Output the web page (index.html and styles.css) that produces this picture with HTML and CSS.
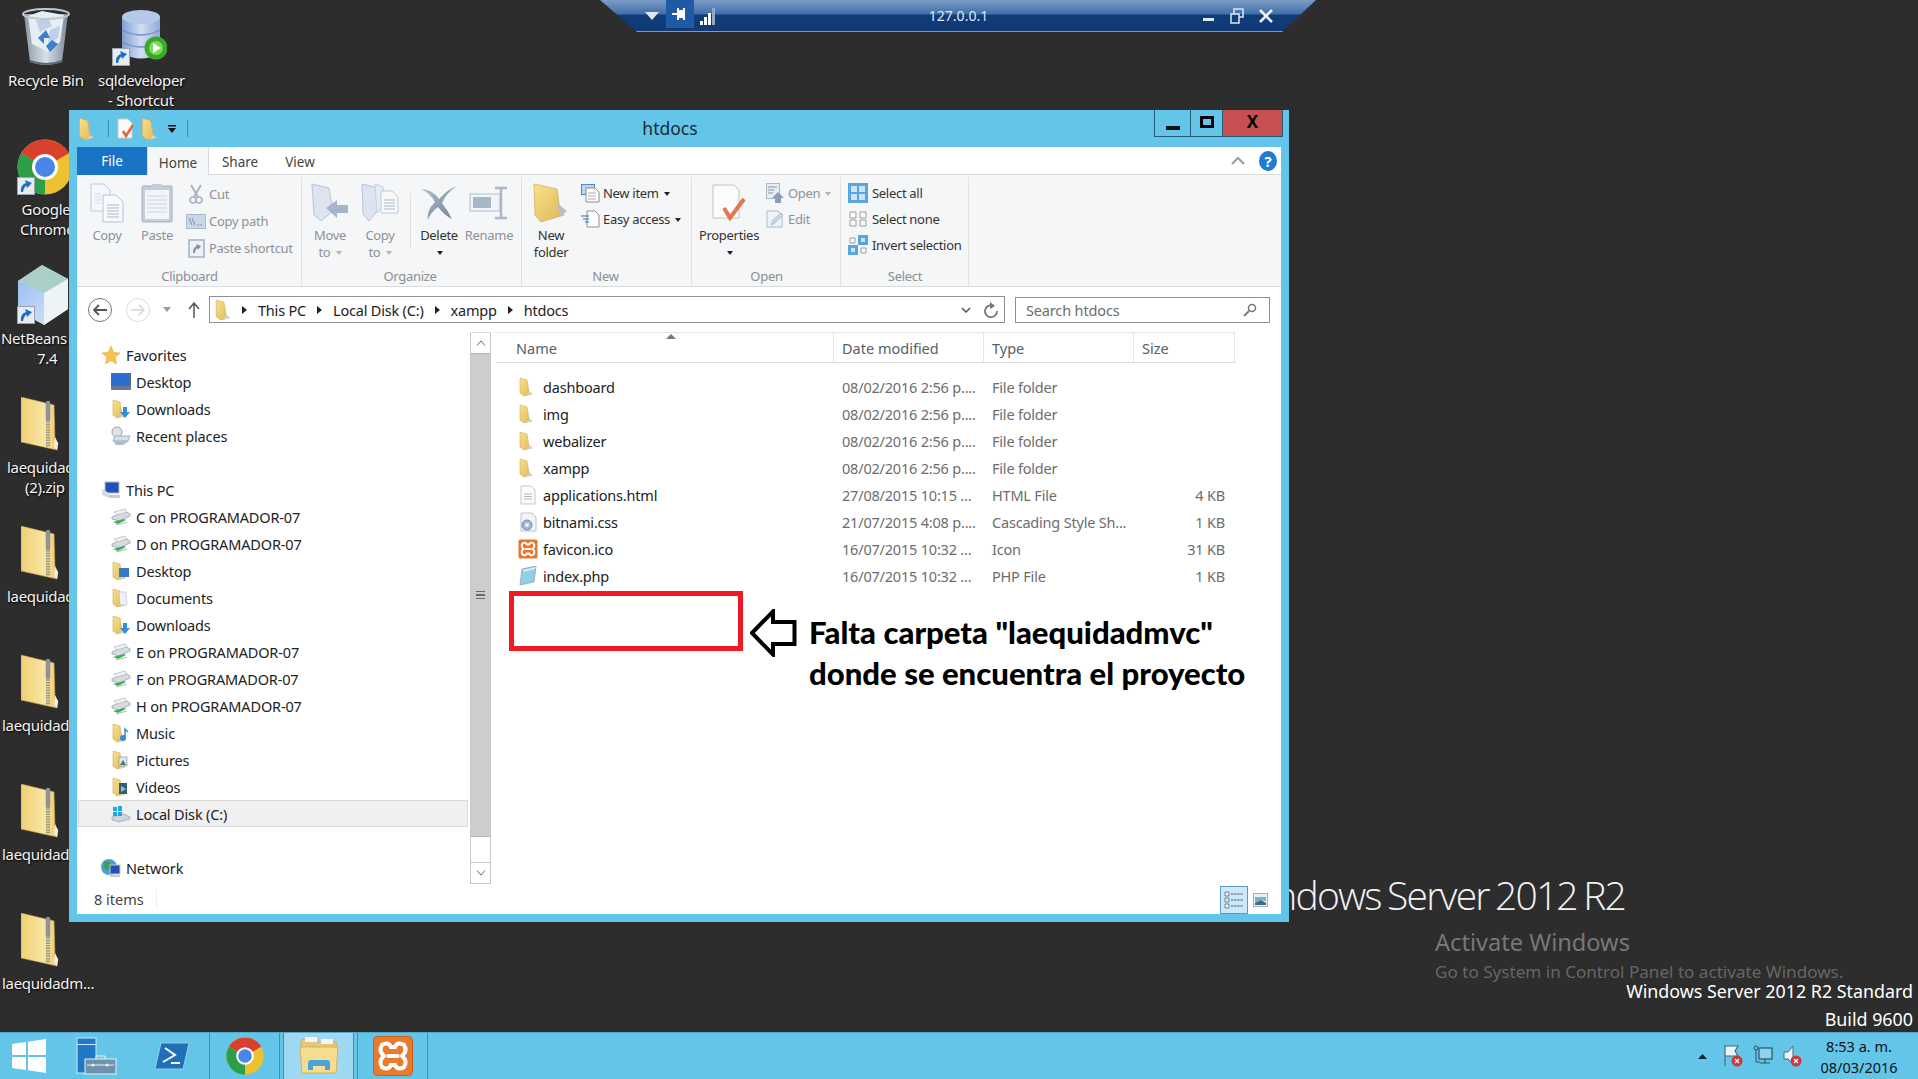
FILE: index.html
```html
<!DOCTYPE html>
<html lang="en">
<head>
<meta charset="utf-8">
<title>htdocs</title>
<link rel="stylesheet" href="styles.css">
</head>
<body>
<svg class="defs" width="0" height="0" aria-hidden="true">
  <defs>
    <linearGradient id="gFold" x1="0" y1="0" x2="1" y2="1"><stop offset="0" stop-color="#f9e18c"/><stop offset="1" stop-color="#deb756"/></linearGradient>
    <linearGradient id="gZip" x1="0" y1="0" x2="1" y2="0"><stop offset="0" stop-color="#efcf74"/><stop offset=".6" stop-color="#f9e6a2"/><stop offset="1" stop-color="#ebc96e"/></linearGradient>
    <linearGradient id="gX" x1="0" y1="0" x2="1" y2="1"><stop offset="0" stop-color="#b3c1d2"/><stop offset="1" stop-color="#6f8298"/></linearGradient>
    <linearGradient id="gCube" x1="0" y1="0" x2="1" y2="1"><stop offset="0" stop-color="#8fb8f0"/><stop offset="1" stop-color="#dfeafa"/></linearGradient>
    <linearGradient id="gBin" x1="0" y1="0" x2="1" y2="0"><stop offset="0" stop-color="#8b9aa8"/><stop offset=".5" stop-color="#d5dfe8"/><stop offset="1" stop-color="#7d8b98"/></linearGradient>
    <linearGradient id="gDb" x1="0" y1="0" x2="1" y2="0"><stop offset="0" stop-color="#7f9fd2"/><stop offset=".5" stop-color="#d2def2"/><stop offset="1" stop-color="#8eaad8"/></linearGradient>
    <symbol id="zip" viewBox="0 0 38 54">
      <path d="M0 0 L33 8 L34 44 L37 46 L36 53 L0 45Z" fill="url(#gZip)" stroke="#c8a24e" stroke-width=".6"/>
      <path d="M27 6 L27 50" stroke="#9a9a8e" stroke-width="4" stroke-dasharray="1.6 1"/>
      <path d="M27 6 L27 22" stroke="#8e9296" stroke-width="4.5" stroke-linecap="round"/>
      <path d="M34 40 L37 46 L36 53 L33 50Z" fill="#f3efe0"/>
    </symbol>
    <symbol id="fold" viewBox="0 0 20 20">
      <path d="M2 1 L9 3 L11 15 L14 17 L6 19 L2 16Z" fill="url(#gFold)" stroke="#d0ac58" stroke-width=".6"/>
      <path d="M11 15 L14 17 L8 19Z" fill="#cfcfcf"/>
    </symbol>
    <symbol id="drive" viewBox="0 0 20 20">
      <path d="M1 10 L14 4 L19 7 L19 9 L8 14 L1 12Z" fill="#d6dbe0" stroke="#8e959c" stroke-width=".7"/>
      <path d="M3 5 L14 2 L16 5 L6 8Z" fill="#eef1f3" stroke="#a6acb2" stroke-width=".6"/>
      <path d="M2 15 L13 12 L15 13 L7 17Z" fill="#3fae58"/>
      <path d="M5 18 L16 15" stroke="#b5bbc0" stroke-width="1.2"/>
    </symbol>
    <symbol id="short" viewBox="0 0 18 18">
      <rect x=".5" y=".5" width="17" height="17" fill="#e8ecf0" stroke="#9aa4ac"/>
      <path d="M4 15 Q3 8 9 6 L8 3 L15 6 L10 11 L9.500 8.500 Q7 10 6 15Z" fill="#1b6fc6"/>
    </symbol>
  </defs>
</svg>

<main class="desktop">
  <div class="wallmark">Windows Server 2012 R2</div>
  <div class="activate">
    <div class="act-big">Activate Windows</div>
    <div class="act-small">Go to System in Control Panel to activate Windows.</div>
  </div>
  <div class="edition">
    <div>Windows Server 2012 R2 Standard</div>
    <div>Build 9600</div>
  </div>

  <svg class="dico d-bin" width="48" height="58" viewBox="0 0 48 58">
    <path d="M2 6 L46 6 L40 54 Q24 60 8 54Z" fill="url(#gBin)"/>
    <path d="M6 8 L20 3 L42 7 L38 34 L26 44 L10 36Z" fill="#e6edf5"/>
    <path d="M14 12 L26 10 L30 18 L18 24Z M28 22 L38 18 L36 30 L26 36Z" fill="#bdd0e6"/>
    <path d="M16 30 L24 22 L28 30 L22 30 L22 36Z M30 32 L36 36 L28 44 L24 38Z" fill="#3f7fd0"/>
    <ellipse cx="24" cy="6" rx="23" ry="5" fill="none" stroke="#c0c8d0" stroke-width="2"/>
    <path d="M8 52 Q24 58 40 52 L40 54 Q24 60 8 54Z" fill="#5d6770"/>
  </svg>
  <div class="dlabel l-bin">Recycle Bin</div>

  <svg class="dico d-sql" width="55" height="54" viewBox="0 0 55 54">
    <path d="M10 7 Q29 -4 48 7 L48 43 Q29 54 10 43Z" fill="url(#gDb)"/>
    <ellipse cx="29" cy="7" rx="19" ry="7" fill="#b5c8e8"/>
    <path d="M10 20 Q29 30 48 20 M10 32 Q29 42 48 32" fill="none" stroke="#6f8fc2" stroke-width="1.400"/>
    <circle cx="44" cy="38" r="11.500" fill="#3aa92a"/>
    <circle cx="44" cy="38" r="7" fill="#7ed957"/>
    <path d="M41 33 L49 38 L41 43Z" fill="#fff"/>
  </svg>
  <svg class="dico d-sqls" width="18" height="18"><use href="#short"/></svg>
  <div class="dlabel l-sql">sqldeveloper<br>- Shortcut</div>

  <svg class="dico d-chr" width="56" height="56" viewBox="-28 -28 56 56">
    <circle r="27.500" fill="#ecc230"/>
    <path d="M0 0 L-23.800 -13.700 A27.500 27.500 0 0 1 23.800 -13.700Z" fill="#d9402e"/>
    <path d="M0 0 L-23.800 -13.700 A27.500 27.500 0 0 0 0 27.500Z" fill="#2f9e4a"/>
    <circle r="13" fill="#fff"/><circle r="10" fill="#4a86e8"/>
  </svg>
  <svg class="dico d-chrs" width="18" height="18"><use href="#short"/></svg>
  <div class="dlabel l-chr">Google<br>Chrome</div>

  <svg class="dico d-nb" width="56" height="60" viewBox="0 0 56 60">
    <path d="M26 0 L52 14 L52 44 L28 60 L2 46 L2 16Z" fill="url(#gCube)"/>
    <path d="M26 0 L52 14 L28 28 L2 16Z" fill="#a9cfc8"/>
    <path d="M28 28 L52 14 L52 44 L28 60Z" fill="#eef3f8"/>
  </svg>
  <svg class="dico d-nbs" width="18" height="18"><use href="#short"/></svg>
  <div class="dlabel l-nb">NetBeans</div>
  <div class="dlabel l-nb2">7.4</div>

  <svg class="dico d-z1" width="38" height="54"><use href="#zip"/></svg>
  <div class="dlabel l-z1">laequidadmvc<br><span class="l-indent">(2).zip</span></div>
  <svg class="dico d-z2" width="38" height="54"><use href="#zip"/></svg>
  <div class="dlabel l-z2">laequidadmvc</div>
  <svg class="dico d-z3" width="38" height="54"><use href="#zip"/></svg>
  <div class="dlabel l-z3">laequidadmvc</div>
  <svg class="dico d-z4" width="38" height="54"><use href="#zip"/></svg>
  <div class="dlabel l-z4">laequidadmvc</div>
  <svg class="dico d-z5" width="38" height="54"><use href="#zip"/></svg>
  <div class="dlabel l-z5">laequidadm...</div>

  <div class="rdp">
    <svg width="14" height="10" viewBox="0 0 14 10" class="rdp-drop"><path d="M0 1H14L7 9Z" fill="#dfe8f2"/></svg>
    <span class="rdp-pin"><svg width="18" height="18" viewBox="0 0 18 18"><path d="M1 9H7 M7 3V15 M13 3V15 M7 6H13V12H7Z" fill="#fff" stroke="#fff" stroke-width="2"/></svg></span>
    <svg class="rdp-sig" width="16" height="18" viewBox="0 0 16 18"><path d="M0 14h3v4H0z M4 10h3v8H4z M8 6h3v12H8z" fill="#fff"/><path d="M12 1h3v17h-3z" fill="#8fa9c8"/></svg>
    <span class="rdp-title">127.0.0.1</span>
    <span class="rdp-ctl">
      <svg width="12" height="12" viewBox="0 0 12 12"><path d="M0 8H11V11H0Z" fill="#dfe8f2"/></svg>
      <svg width="14" height="16" viewBox="0 0 14 16"><path d="M1 6H9V15H1Z M4 6V1H13V9H9" fill="none" stroke="#dfe8f2" stroke-width="1.500"/></svg>
      <svg width="14" height="14" viewBox="0 0 14 14"><path d="M1 1L13 13M13 1L1 13" stroke="#eef3f8" stroke-width="2.600"/></svg>
    </span>
  </div>

  <section class="window">
    <header class="titlebar">
      <div class="qat">
        <svg width="24" height="24"><use href="#fold"/></svg>
        <i class="qat-sep"></i>
        <svg width="20" height="22" viewBox="0 0 20 22"><path d="M2 1H12L16 5V20H2Z" fill="#fafafa" stroke="#c9c9c9"/><path d="M7 13L10 18L17 7" fill="none" stroke="#e0693a" stroke-width="2.500"/></svg>
        <svg width="24" height="24"><use href="#fold"/></svg>
        <svg class="qat-drop" width="8" height="8" viewBox="0 0 8 8"><path d="M0 0H8V1.500H0Z M0 3H8L4 8Z" fill="#111"/></svg>
        <i class="qat-sep"></i>
      </div>
      <div class="wintitle">htdocs</div>
      <div class="caption">
        <span class="cap cap-min"><i></i></span>
        <span class="cap cap-max"><i></i></span>
        <span class="cap cap-close">X</span>
      </div>
    </header>

    <nav class="tabs">
      <span class="tab tab-file">File</span>
      <span class="tab tab-home">Home</span>
      <span class="tab tab-share">Share</span>
      <span class="tab tab-view">View</span>
      <span class="tabs-right">
        <svg width="14" height="9" viewBox="0 0 14 9"><path d="M1 8L7 2L13 8" fill="none" stroke="#9a9a9a" stroke-width="2"/></svg>
        <span class="help">?</span>
      </span>
    </nav>

    <div class="ribbon">
      <div class="group g-clip">
        <div class="gbody">
          <div class="big w46">
            <svg width="34" height="40" viewBox="0 0 34 40"><path d="M1 1H14L20 7V28H1Z" fill="#f4f7fb" stroke="#bccadb"/><path d="M13 12H26L33 19V39H13Z" fill="#f8fafc" stroke="#b5c4d7"/><path d="M17 22H29M17 25H29M17 28H29M17 31H29M17 34H29" stroke="#a9b8ca"/><path d="M5 11H11M5 14H11M5 17H11M5 20H11" stroke="#d3dce6"/></svg>
            <span class="dim">Copy</span>
          </div>
          <div class="big w54">
            <svg width="32" height="40" viewBox="0 0 32 40"><rect x="1" y="3" width="30" height="36" rx="1" fill="#c4cdda" stroke="#a3b0c2"/><rect x="4" y="7" width="24" height="29" fill="#f2f5f8"/><path d="M6 13H26M6 17H26M6 21H26M6 25H26M6 29H26" stroke="#c9d3df"/><path d="M11 4H21V1H11Z" fill="#c4cdda"/></svg>
            <span class="dim">Paste</span>
          </div>
          <div class="col">
            <div class="small"><span class="sico"><svg width="14" height="21" viewBox="0 0 14 21"><path d="M2 1L9 13M12 1L5 13" stroke="#a7b3c3" stroke-width="2"/><circle cx="4" cy="16" r="3" fill="none" stroke="#a7b3c3" stroke-width="1.600"/><circle cx="10" cy="16" r="3" fill="none" stroke="#a7b3c3" stroke-width="1.600"/></svg></span><span class="dim">Cut</span></div>
            <div class="small"><span class="sico"><svg width="20" height="15" viewBox="0 0 20 15"><rect x=".5" y=".5" width="19" height="14" fill="#c9d7eb" stroke="#a8b9d0"/><path d="M3 4L6 11M6 4L9 11M11 11H13M14 11H16" stroke="#7d8fa8"/></svg></span><span class="dim">Copy path</span></div>
            <div class="small"><span class="sico"><svg width="17" height="20" viewBox="0 0 17 20"><rect x="1" y="2" width="15" height="17" fill="#eef2f7" stroke="#9fb0c6" stroke-width="1.500"/><path d="M5 15Q5 9 9 8L8 6L13 8L10 12L9.500 10Q7 11 7 15Z" fill="#7a8da6"/></svg></span><span class="dim">Paste shortcut</span></div>
          </div>
        </div>
        <div class="glabel">Clipboard</div>
      </div>

      <div class="group g-org">
        <div class="gbody">
          <div class="big w50">
            <svg width="38" height="40" viewBox="0 0 38 40"><path d="M1 1L18 5L22 28L10 38L3 32Z" fill="#dbe4f0" stroke="#b8c6d9"/><path d="M15 25L26 17V22H37V30H26V35Z" fill="#a4b5ca"/></svg>
            <span class="dim">Move<br>to <em class="caret dimc"></em></span>
          </div>
          <div class="big w50">
            <svg width="38" height="40" viewBox="0 0 38 40"><path d="M1 1L14 4L18 26L8 38L2 31Z" fill="#dbe4f0" stroke="#b8c6d9"/><path d="M14 1L22 4L24 20L16 30Z" fill="#e6ecf4" stroke="#c6d1df"/><path d="M20 8H31L37 14V30H20Z" fill="#f7f9fb" stroke="#bccadb"/><path d="M23 17H34M23 20H34M23 23H34M23 26H34" stroke="#a9b8ca"/></svg>
            <span class="dim">Copy<br>to <em class="caret dimc"></em></span>
          </div>
          <i class="org-sep"></i>
          <div class="big w50">
            <svg width="38" height="36" viewBox="0 0 38 36"><path d="M1 4Q12 4 19 14Q28 4 37 1Q26 8 22 18Q28 26 32 34Q24 30 18 22Q10 28 8 35Q6 26 15 17Q10 8 1 4Z" fill="url(#gX)"/></svg>
            <span class="txt">Delete<br><em class="caret"></em></span>
          </div>
          <div class="big w50">
            <svg width="40" height="32" viewBox="0 0 40 32"><rect x="1" y="7" width="30" height="17" fill="#f0f3f7" stroke="#b0bece"/><rect x="4" y="10" width="18" height="11" fill="#a7b6c9"/><path d="M26 1H38M26 31H38M32 1V31" stroke="#aab8c9" stroke-width="2.500"/></svg>
            <span class="dim">Rename</span>
          </div>
        </div>
        <div class="glabel">Organize</div>
      </div>

      <div class="group g-new">
        <div class="gbody">
          <div class="big w50">
            <svg width="36" height="40" viewBox="0 0 36 40"><path d="M1 1L24 6L27 28L31 32L8 39L2 32Z" fill="url(#gFold)" stroke="#cfa853" stroke-width=".7"/><path d="M24 20L34 28L27 34Z" fill="#bdbdbd"/></svg>
            <span class="txt">New<br>folder</span>
          </div>
          <div class="col">
            <div class="small"><span class="sico"><svg width="19" height="19" viewBox="0 0 19 19"><rect x=".5" y=".5" width="13" height="10" fill="#bcd4ee" stroke="#5b87b8"/><path d="M5 4H14L18 8V18H5Z" fill="#fff" stroke="#8a8a8a"/><path d="M7 9H15M7 12H15M7 15H15" stroke="#aaa"/></svg></span><span class="txt">New item <em class="caret"></em></span></div>
            <div class="small"><span class="sico"><svg width="20" height="18" viewBox="0 0 20 18"><path d="M7 1H15L19 5V17H7Z" fill="#fff" stroke="#8f8f8f"/><path d="M1 6H9M3 9H9M5 12H9" stroke="#2c6fb3" stroke-width="1.200"/></svg></span><span class="txt">Easy access <em class="caret"></em></span></div>
          </div>
        </div>
        <div class="glabel">New</div>
      </div>

      <div class="group g-open">
        <div class="gbody">
          <div class="big w70">
            <svg width="34" height="38" viewBox="0 0 34 38"><path d="M1 1H22L27 6V34H1Z" fill="#fbfbfb" stroke="#c2c2c2"/><path d="M12 24L18 34L32 15" fill="none" stroke="#e2764f" stroke-width="4"/></svg>
            <span class="txt">Properties<br><em class="caret"></em></span>
          </div>
          <div class="col">
            <div class="small"><span class="sico"><svg width="19" height="20" viewBox="0 0 19 20"><rect x=".5" y=".5" width="13" height="15" fill="#e7edf5" stroke="#a9b8ca"/><path d="M2 4H11M2 7H8M2 10H7" stroke="#8698b0"/><path d="M12 9L18 15H15V20H9V15H6Z" fill="#8a9db6"/></svg></span><span class="dim">Open <em class="caret dimc"></em></span></div>
            <div class="small"><span class="sico"><svg width="18" height="18" viewBox="0 0 18 18"><path d="M1 1H12L16 5V17H1Z" fill="#eef3f8" stroke="#a9bbd0"/><path d="M5 15L7 10L15 3L17 5L9 13Z" fill="#c9d6e6" stroke="#9fb2c8" stroke-width=".7"/></svg></span><span class="dim">Edit</span></div>
          </div>
        </div>
        <div class="glabel">Open</div>
      </div>

      <div class="group g-sel">
        <div class="gbody">
          <div class="col col-sel">
            <div class="small"><span class="sico sico-w"><svg width="20" height="20" viewBox="0 0 20 20"><rect width="20" height="20" fill="#57a5e3"/><path d="M3 3h6v6H3z M11 3h6v6h-6z M3 11h6v6H3z M11 11h6v6h-6z" fill="#cbe3f7"/></svg></span><span class="txt">Select all</span></div>
            <div class="small"><span class="sico sico-w"><svg width="18" height="16" viewBox="0 0 18 16"><path d="M1 1h6v6H1z M11 1h6v6h-6z M1 9h6v6H1z M11 9h6v6h-6z" fill="#fafafa" stroke="#9d9d9d"/></svg></span><span class="txt">Select none</span></div>
            <div class="small"><span class="sico sico-w"><svg width="20" height="20" viewBox="0 0 20 20"><path d="M10 0h10v10H10z M0 10h10v10H0z" fill="#57a5e3"/><path d="M13 3h4v4h-4z M3 13h4v4H3z" fill="#cbe3f7"/><path d="M2 3h5v5H2z M13 13h5v5h-5z" fill="#fafafa" stroke="#9d9d9d"/></svg></span><span class="txt">Invert selection</span></div>
          </div>
        </div>
        <div class="glabel">Select</div>
      </div>
    </div>

    <div class="navbar">
      <span class="circ"><svg width="14" height="12" viewBox="0 0 14 12"><path d="M6 1L1 6L6 11M1 6H14" fill="none" stroke="#555" stroke-width="1.800"/></svg></span>
      <span class="circ circ-off"><svg width="14" height="12" viewBox="0 0 14 12"><path d="M8 1L13 6L8 11M13 6H0" fill="none" stroke="#ddd" stroke-width="1.800"/></svg></span>
      <svg class="hist" width="8" height="5" viewBox="0 0 8 5"><path d="M0 0H8L4 5Z" fill="#999"/></svg>
      <svg class="up" width="12" height="16" viewBox="0 0 12 16"><path d="M1 7L6 1L11 7M6 1V16" fill="none" stroke="#555" stroke-width="1.500"/></svg>
      <div class="address">
        <svg class="addr-fold" width="22" height="22"><use href="#fold"/></svg>
        <span class="crumbs">
          <em class="sep"></em><span>This PC</span><em class="sep"></em><span>Local Disk (C:)</span><em class="sep"></em><span>xampp</span><em class="sep"></em><span>htdocs</span>
        </span>
        <svg class="addr-chev" width="10" height="6" viewBox="0 0 10 6"><path d="M1 1L5 5L9 1" fill="none" stroke="#555" stroke-width="1.500"/></svg>
        <svg class="addr-ref" width="14" height="18" viewBox="0 0 14 18"><path d="M10 5A6 6 0 1 0 13 10" fill="none" stroke="#777" stroke-width="1.800"/><path d="M6 1L11 5L6 8Z" fill="#777"/></svg>
      </div>
      <div class="search">
        <span>Search htdocs</span>
        <svg width="14" height="14" viewBox="0 0 14 14"><circle cx="9" cy="5" r="3.500" fill="none" stroke="#777" stroke-width="1.500"/><path d="M6 8L1 13" stroke="#777" stroke-width="1.800"/></svg>
      </div>
    </div>

    <div class="main">
      <aside class="tree">
        <div class="t t0"><svg class="tico" width="20" height="20" viewBox="0 0 20 20"><path d="M10 1L12.700 7.200L19 8L14.300 12.300L15.600 19L10 15.600L4.400 19L5.700 12.300L1 8L7.300 7.200Z" fill="#f6c24f" stroke="#e4a23a" stroke-width=".5"/></svg>Favorites</div>
        <div class="t t1"><svg class="tico" width="20" height="18" viewBox="0 0 20 18"><rect x=".5" y=".5" width="19" height="14" fill="#2a6fd0" stroke="#5c6a78"/><rect y="13" width="20" height="4" fill="#6c7a88"/></svg>Desktop</div>
        <div class="t t1"><svg class="tico" width="20" height="20" viewBox="0 0 20 20"><use href="#fold"/><path d="M12 8H16V13H19L14 19L9 13H12Z" fill="#2f8fdc"/></svg>Downloads</div>
        <div class="t t1"><svg class="tico" width="20" height="20" viewBox="0 0 20 20"><circle cx="6" cy="6" r="5" fill="#dfe4e8" stroke="#9aa2a8"/><path d="M4 10H19L17 15H2Z" fill="#cfe2ef" stroke="#8e99a2" stroke-width=".7"/><path d="M2 15L18 15L12 19H5Z" fill="#b5bbc0"/></svg>Recent places</div>
        <div class="t t0 gap"><svg class="tico" width="20" height="20" viewBox="0 0 20 20"><rect x="4" y="2" width="14" height="11" fill="#2350b8" stroke="#b5bcc4"/><path d="M1 9L8 13V18L1 15Z" fill="#d5dbe0"/><path d="M8 15H19V18H8Z" fill="#c4cbd2"/></svg>This PC</div>
        <div class="t t1"><svg class="tico" width="20" height="20"><use href="#drive"/></svg>C on PROGRAMADOR-07</div>
        <div class="t t1"><svg class="tico" width="20" height="20"><use href="#drive"/></svg>D on PROGRAMADOR-07</div>
        <div class="t t1"><svg class="tico" width="20" height="20" viewBox="0 0 20 20"><use href="#fold"/><rect x="8" y="7" width="10" height="9" fill="#3b78c8"/></svg>Desktop</div>
        <div class="t t1"><svg class="tico" width="20" height="20" viewBox="0 0 20 20"><use href="#fold"/><path d="M8 4H15L16 17H9Z" fill="#eef1f4" stroke="#b5bcc4" stroke-width=".6"/></svg>Documents</div>
        <div class="t t1"><svg class="tico" width="20" height="20" viewBox="0 0 20 20"><use href="#fold"/><path d="M12 8H16V13H19L14 19L9 13H12Z" fill="#2f8fdc"/></svg>Downloads</div>
        <div class="t t1"><svg class="tico" width="20" height="20"><use href="#drive"/></svg>E on PROGRAMADOR-07</div>
        <div class="t t1"><svg class="tico" width="20" height="20"><use href="#drive"/></svg>F on PROGRAMADOR-07</div>
        <div class="t t1"><svg class="tico" width="20" height="20"><use href="#drive"/></svg>H on PROGRAMADOR-07</div>
        <div class="t t1"><svg class="tico" width="20" height="20" viewBox="0 0 20 20"><use href="#fold"/><circle cx="12" cy="15" r="3" fill="#2f8fdc"/><path d="M14 15V6L17 9" fill="none" stroke="#2f8fdc" stroke-width="1.500"/></svg>Music</div>
        <div class="t t1"><svg class="tico" width="20" height="20" viewBox="0 0 20 20"><use href="#fold"/><rect x="8" y="7" width="8" height="9" fill="#d9e6f2" stroke="#7d8b98" stroke-width=".6"/><path d="M9 15L12 10L15 15Z" fill="#3f7f5a"/></svg>Pictures</div>
        <div class="t t1"><svg class="tico" width="20" height="20" viewBox="0 0 20 20"><use href="#fold"/><rect x="8" y="6" width="8" height="11" fill="#3c5d6e"/><path d="M10 9L15 12L10 15Z" fill="#7fc7d9"/></svg>Videos</div>
        <div class="t t1 t-sel"><svg class="tico" width="20" height="20" viewBox="0 0 20 20"><path d="M1 13L13 10L19 13V15L8 18L1 16Z" fill="#d0d5da" stroke="#8e959c" stroke-width=".6"/><path d="M2 3H6V7H2Z M7 2H11V7H7Z M2 8H6V12H2Z M7 8H11V12H7Z" fill="#1ea7e8"/></svg>Local Disk (C:)</div>
        <div class="t t0 gap"><svg class="tico" width="20" height="20" viewBox="0 0 20 20"><circle cx="8" cy="9" r="8" fill="#4b9fd8"/><path d="M3 4Q8 2 10 6T6 12L3 10Z" fill="#3c9e4f"/><rect x="9" y="7" width="10" height="9" fill="#2350b8" stroke="#c2c8ce"/><path d="M9 17H19V19H9Z" fill="#c4cbd2"/></svg>Network</div>
      </aside>
      <div class="vscroll">
        <span class="sb-btn"><svg width="10" height="6" viewBox="0 0 10 6"><path d="M1 5.500L5 1L9 5.500" fill="none" stroke="#606060"/></svg></span>
        <span class="sb-thumb"><i></i><i></i><i></i></span>
        <span class="sb-track"></span>
        <span class="sb-btn"><svg width="10" height="6" viewBox="0 0 10 6"><path d="M1 .5L5 5L9 .5" fill="none" stroke="#606060"/></svg></span>
      </div>
      <div class="files">
        <div class="fhead">
          <span class="c-name">Name<svg class="sort" width="10" height="5" viewBox="0 0 10 5"><path d="M0 5L5 0L10 5Z" fill="#777"/></svg></span>
          <span class="c-date">Date modified</span>
          <span class="c-type">Type</span>
          <span class="c-size">Size</span>
        </div>
        <div class="frows">
          <div class="frow"><span class="c-name"><svg width="20" height="20"><use href="#fold"/></svg>dashboard</span><span class="c-date">08/02/2016 2:56 p....</span><span class="c-type">File folder</span><span class="c-size"></span></div>
          <div class="frow"><span class="c-name"><svg width="20" height="20"><use href="#fold"/></svg>img</span><span class="c-date">08/02/2016 2:56 p....</span><span class="c-type">File folder</span><span class="c-size"></span></div>
          <div class="frow"><span class="c-name"><svg width="20" height="20"><use href="#fold"/></svg>webalizer</span><span class="c-date">08/02/2016 2:56 p....</span><span class="c-type">File folder</span><span class="c-size"></span></div>
          <div class="frow"><span class="c-name"><svg width="20" height="20"><use href="#fold"/></svg>xampp</span><span class="c-date">08/02/2016 2:56 p....</span><span class="c-type">File folder</span><span class="c-size"></span></div>
          <div class="frow"><span class="c-name"><svg width="20" height="20" viewBox="0 0 20 20"><path d="M3 1H13L17 5V19H3Z" fill="#fdfdfd" stroke="#c8c8c8"/><path d="M6 9H14M6 11.500H14M6 14H14" stroke="#b5b5b5"/></svg>applications.html</span><span class="c-date">27/08/2015 10:15 ...</span><span class="c-type">HTML File</span><span class="c-size">4 KB</span></div>
          <div class="frow"><span class="c-name"><svg width="20" height="20" viewBox="0 0 20 20"><path d="M3 1H14L18 5V19H3Z" fill="#f2f5f8" stroke="#bcc4cc"/><circle cx="9" cy="13" r="5" fill="#9cbbd8" stroke="#6f8eae"/><circle cx="9" cy="13" r="2" fill="#eef3f8"/></svg>bitnami.css</span><span class="c-date">21/07/2015 4:08 p....</span><span class="c-type">Cascading Style Sh...</span><span class="c-size">1 KB</span></div>
          <div class="frow"><span class="c-name"><svg width="20" height="20" viewBox="0 0 40 40"><rect x="1" y="1" width="38" height="38" rx="4" fill="#e9762b"/><path d="M9 9Q15 5 18 11H22Q25 5 31 9Q35 15 29 20Q35 25 31 31Q25 35 22 29H18Q15 35 9 31Q5 25 11 20Q5 15 9 9ZM14 20H26" fill="none" stroke="#fff" stroke-width="4"/></svg>favicon.ico</span><span class="c-date">16/07/2015 10:32 ...</span><span class="c-type">Icon</span><span class="c-size">31 KB</span></div>
          <div class="frow"><span class="c-name"><svg width="20" height="20" viewBox="0 0 20 20"><path d="M4 3L18 0L16 16L2 19Z" fill="#8fd0e6" stroke="#8a9aa6" stroke-width=".7"/><path d="M5 4L18 1L17 3L5 6Z" fill="#d8eef6"/></svg>index.php</span><span class="c-date">16/07/2015 10:32 ...</span><span class="c-type">PHP File</span><span class="c-size">1 KB</span></div>
        </div>
        <div class="redbox"></div>
        <svg class="callout-arrow" width="47" height="48" viewBox="0 0 47 48"><path d="M2 24L23 2.500V13H44.500V35H23V45.500Z" fill="#fff" stroke="#000" stroke-width="4"/></svg>
        <div class="callout">Falta carpeta "laequidadmvc"<br>donde se encuentra el proyecto</div>
      </div>
    </div>

    <footer class="status">
      <span>8 items</span>
      <i class="st-sep"></i>
      <span class="views">
        <span class="view-on"><svg width="20" height="20" viewBox="0 0 20 20"><path d="M1 2H5V6H1Z M1 8H5V12H1Z M1 14H5V18H1Z" fill="#eef3f8" stroke="#6f8296"/><path d="M7 4H19M7 10H19M7 16H19" stroke="#44627e" stroke-dasharray="2.500 .6"/></svg></span>
        <svg width="15" height="14" viewBox="0 0 15 14"><rect x=".5" y=".5" width="14" height="13" fill="#eaf1f6" stroke="#9fb2c2"/><path d="M2 4H13V8L8 7L2 10Z" fill="#6fb4d6"/><path d="M2 10L8 7L13 10V12H2Z" fill="#3c6a7e"/></svg>
      </span>
    </footer>
  </section>

  <footer class="taskbar">
    <svg class="tb-start" width="34" height="34" viewBox="0 0 34 34"><path d="M0 5L14 3V16H0Z M16 2.700L34 0V16H16Z M0 18H14V31L0 29Z M16 18H34V34L16 31.300Z" fill="#fff"/></svg>
    <svg class="tb-srv" width="41" height="38" viewBox="0 0 41 38"><rect x="1" y="1" width="19" height="35" fill="#2078c8" stroke="#cfe8f5"/><rect x="1" y="7" width="19" height="1" fill="#cfe8f5"/><rect x="9" y="22" width="31" height="15" fill="#6f93ad" stroke="#e6f0f5"/><path d="M20 22V19H29V22" fill="none" stroke="#e6f0f5"/><path d="M11 28H38" stroke="#e6f0f5"/><circle cx="17" cy="28" r="1.500" fill="#e6f0f5"/><circle cx="31" cy="28" r="1.500" fill="#e6f0f5"/></svg>
    <svg class="tb-ps" width="36" height="28" viewBox="0 0 36 28"><path d="M7 1H35L29 27H1Z" fill="#1f6fb8" stroke="#9fc8e6"/><path d="M11 6L21 13L9 20" fill="none" stroke="#fff" stroke-width="2"/><path d="M17 21H26" stroke="#fff" stroke-width="2"/></svg>
    <span class="tb-btn tb-first">
      <svg width="38" height="38" viewBox="-28 -28 56 56"><circle r="27.500" fill="#ecc230"/><path d="M0 0 L-23.800 -13.700 A27.500 27.500 0 0 1 23.800 -13.700Z" fill="#d9402e"/><path d="M0 0 L-23.800 -13.700 A27.500 27.500 0 0 0 0 27.500Z" fill="#2f9e4a"/><circle r="13" fill="#fff"/><circle r="10" fill="#4a86e8"/></svg>
    </span>
    <span class="tb-btn tb-active">
      <svg width="40" height="40" viewBox="0 0 40 40"><path d="M2 6Q2 3 5 3H14L17 6H36Q38 6 38 8V14H2Z" fill="#e7c777" stroke="#c9a650" stroke-width=".7"/><path d="M6 1H18V6H6Z M22 3H34V8H22Z" fill="#f4f4f4"/><path d="M1 11H39L37 37H3Z" fill="#f6dc8e" stroke="#caa85a" stroke-width=".8"/><path d="M9 34V27Q9 24 12 24H28Q31 24 31 27V34Z" fill="#4aa3dc"/><rect x="14" y="30" width="12" height="4" fill="#f6dc8e"/></svg>
    </span>
    <span class="tb-btn">
      <svg width="40" height="40" viewBox="0 0 40 40"><rect x=".5" y=".5" width="39" height="39" rx="4" fill="#ec7a2e" stroke="#c45f1c"/><path d="M9 9Q15 5 18 11H22Q25 5 31 9Q35 15 29 20Q35 25 31 31Q25 35 22 29H18Q15 35 9 31Q5 25 11 20Q5 15 9 9ZM14 20H26" fill="none" stroke="#fff" stroke-width="4"/></svg>
    </span>
    <span class="tray">
      <svg class="tray-arrow" width="9" height="5" viewBox="0 0 9 5"><path d="M0 5L4.500 0L9 5Z" fill="#123"/></svg>
      <svg width="20" height="24" viewBox="0 0 20 24"><path d="M2 1V22M2 2H15L12 7L15 12H2" fill="#e8f4fa" stroke="#4a6a80" stroke-width="1.200"/><circle cx="14" cy="17" r="5.500" fill="#c93a3a"/><path d="M12 15L16 19M16 15L12 19" stroke="#fff" stroke-width="1.200"/></svg>
      <svg width="20" height="22" viewBox="0 0 20 22"><rect x="6" y="3" width="13" height="11" fill="#8ed2ec" stroke="#2c5368" stroke-width="1.200"/><path d="M12 14V18M7 18H17" stroke="#2c5368" stroke-width="1.200"/><circle cx="3" cy="3" r="2" fill="none" stroke="#2c5368"/><path d="M3 5V17H7" fill="none" stroke="#2c5368"/></svg>
      <svg width="20" height="24" viewBox="0 0 20 24"><path d="M1 8H5L10 2V20L5 15H1Z" fill="#e8f4fa" stroke="#4a6a80"/><circle cx="13" cy="17" r="5.500" fill="#c93a3a"/><path d="M11 15L15 19M15 15L11 19" stroke="#fff" stroke-width="1.200"/></svg>
    </span>
    <span class="clock">8:53 a. m.<br>08/03/2016</span>
  </footer>
</main>
</body>
</html>
```

FILE: styles.css
```css
* { box-sizing: border-box; }
html, body { margin: 0; height: 100%; }
body { background: #2d2d2d; font-family: "Noto Sans", "Open Sans", sans-serif; overflow: hidden; }
em { font-style: normal; }
.defs { position: absolute; }
.desktop { position: relative; width: 1918px; height: 1079px; overflow: hidden; background: #2d2d2d; }

/* desktop text */
.wallmark { position: absolute; right: 293px; top: 869px; font-family: "Open Sans", sans-serif; font-weight: 300; font-size: 39px; line-height: 52px; color: #f2f2f2; letter-spacing: -1.800px; word-spacing: -2px; white-space: nowrap; }
.activate { position: absolute; left: 1435px; top: 927px; color: #777; white-space: nowrap; }
.act-big { font-size: 23.600px; line-height: 30px; margin-bottom: 6px; }
.act-small { font-size: 17.100px; line-height: 18px; color: #666; }
.edition { position: absolute; right: 5px; top: 981px; color: #fff; font-size: 17.850px; line-height: 20px; text-align: right; white-space: nowrap; display: flex; flex-direction: column; gap: 8px; }

/* desktop icons: free canvas */
.dico { position: absolute; }
.dlabel { position: absolute; color: #f2f2f2; font-size: 15px; line-height: 20px; letter-spacing: -.3px; text-shadow: 1px 1px 2px #000; white-space: nowrap; }
.d-bin { left: 22px; top: 8px; }
.l-bin { left: 8px; top: 70px; }
.d-sql { left: 112px; top: 10px; }
.d-sqls { left: 112px; top: 48px; }
.l-sql { left: 98px; top: 70px; width: 86px; text-align: center; }
.d-chr { left: 17px; top: 139px; }
.d-chrs { left: 17px; top: 177px; }
.l-chr { left: 20px; top: 199px; width: 52px; text-align: center; }
.d-nb { left: 16px; top: 265px; }
.d-nbs { left: 17px; top: 306px; }
.l-nb { left: 1px; top: 328px; }
.l-nb2 { left: 37px; top: 348px; }
.d-z1 { left: 21px; top: 397px; }
.l-z1 { left: 7px; top: 457px; }
.l-indent { margin-left: 18px; }
.d-z2 { left: 21px; top: 526px; }
.l-z2 { left: 7px; top: 586px; }
.d-z3 { left: 21px; top: 655px; }
.l-z3 { left: 2px; top: 715px; }
.d-z4 { left: 21px; top: 784px; }
.l-z4 { left: 2px; top: 844px; }
.d-z5 { left: 21px; top: 913px; }
.l-z5 { left: 2px; top: 973px; }

/* remote desktop bar */
.rdp { position: absolute; left: 600px; top: 0; width: 716px; height: 32px; display: flex; align-items: center; padding-left: 45px; padding-right: 43px;
  clip-path: polygon(0 0, 100% 0, 682px 100%, 37px 100%);
  background: linear-gradient(#7c9cc6 0, #3f6fa9 14px, #123c78 15px, #0f3a75 31px, #7d9bc0 31px); color: #dfe8f2; }
.rdp-pin { margin-left: 7px; width: 28px; height: 28px; align-self: flex-start; background: #1f5aa5; display: flex; align-items: center; justify-content: center; }
.rdp-sig { margin-left: 6px; }
.rdp-title { flex: 1; text-align: center; font-size: 14px; padding-right: 2px; margin-top: -1px; }
.rdp-ctl { display: flex; align-items: center; gap: 15px; }

/* window */
.window { position: absolute; left: 69px; top: 110px; width: 1220px; height: 812px; background: #63c6e8; padding: 0 8px 8px; display: flex; flex-direction: column; color: #222; }
.titlebar { height: 37px; margin-right: -2px; display: flex; align-items: flex-start; position: relative; flex: none; }
.qat { width: 133px; height: 37px; display: flex; align-items: center; gap: 4px; flex: none; }
.qat-sep { width: 1px; height: 17px; background: #3b8fb0; margin: 0 3px; }
.qat-drop { margin: 0 4px 0 0; }
.wintitle { flex: 1; text-align: center; font-size: 17.500px; line-height: 37px; padding-right: 25px; color: #1c2a30; }
.caption { display: flex; height: 27px; flex: none; }
.cap { height: 27px; border: 1px solid #2a5a78; border-top: 0; display: flex; align-items: center; justify-content: center; margin-left: -1px; }
.cap-min { width: 37px; }
.cap-min i { width: 14px; height: 4px; background: #111; margin-top: 10px; }
.cap-max { width: 33px; }
.cap-max i { width: 14px; height: 12px; border: 3px solid #000; margin-top: -3px; }
.cap-close { width: 61px; background: #c75050; font-weight: 700; font-size: 17px; color: #000; padding-bottom: 3px; }

.tabs { height: 28px; background: #fff; display: flex; align-items: stretch; flex: none; border-bottom: 1px solid #dadbdc; font-size: 13.500px; color: #444; }
.tab { display: flex; align-items: center; justify-content: center; padding-top: 3px; }
.tab-file { width: 70px; background: #1974c6; color: #fff; padding-top: 0; height: 28px; }
.tab-home { width: 62px; height: 28px; background: #f5f6f7; border: 1px solid #dadbdc; border-bottom: 0; border-top: 0; }
.tab-share { width: 62px; }
.tab-view { width: 58px; }
.tabs-right { margin-left: auto; display: flex; align-items: center; gap: 14px; padding-right: 4px; }
.help { width: 18px; height: 20px; border-radius: 50%; background: #1f7cd0; color: #fff; font-weight: 700; font-size: 15px; display: flex; align-items: center; justify-content: center; }

.ribbon { height: 112px; flex: none; background: #f5f6f7; border-bottom: 1px solid #dadbdc; display: flex; font-size: 13px; letter-spacing: -.3px; color: #333; }
.group { display: flex; flex-direction: column; border-right: 1px solid #dfe1e3; height: 109px; margin-top: 2px; flex: none; }
.g-clip { width: 225px; padding-left: 7px; }
.g-org { width: 220px; padding-left: 3px; }
.g-new { width: 170px; padding-left: 4px; }
.g-open { width: 149px; padding-left: 2px; }
.g-sel { width: 128px; padding-left: 7px; }
.gbody { flex: 1; display: flex; align-items: flex-start; }
.glabel { height: 20px; line-height: 20px; text-align: center; color: #8a8f94; margin-left: -6px; }
.g-open .glabel { margin-left: -1px; }
.big { display: flex; flex-direction: column; align-items: center; text-align: center; flex: none; line-height: 16.500px; }
.big svg { height: 40px; margin: 6px 0 4px; flex: none; }
.w46 { width: 46px; } .w50 { width: 50px; } .w54 { width: 54px; } .w70 { width: 70px; }
.big span { display: block; white-space: nowrap; }
.dim { color: #8d9297; }
.txt { color: #333; }
.caret { display: inline-block; width: 0; height: 0; border-left: 3px solid transparent; border-right: 3px solid transparent; border-top: 4px solid #222; vertical-align: 2px; margin-left: 2px; }
.dimc { border-top-color: #b0b4b8; }
.org-sep { width: 1px; height: 55px; margin: 16px 3px 0 5px; background: #dfe1e3; flex: none; }
.col { display: flex; flex-direction: column; margin-left: 2px; padding-top: 4px; }
.g-new .col { margin-left: 4px; padding-top: 3px; }
.g-open .col { margin-left: 1px; padding-top: 3px; }
.col-sel { margin-left: 0; padding-top: 3px; }
.small { height: 26.700px; display: flex; align-items: center; white-space: nowrap; }
.g-new .small, .g-open .small, .g-sel .small { height: 26px; }
.sico { width: 20px; margin-right: 3px; display: flex; justify-content: center; }
.sico-w { margin-right: 4px; }

.navbar { height: 45px; flex: none; background: #fff; display: flex; align-items: center; padding: 0 11px 0 11px; }
.circ { width: 24px; height: 24px; border: 1.500px solid #777; border-radius: 50%; display: flex; align-items: center; justify-content: center; margin-right: 14px; flex: none; }
.circ-off { border-color: #ddd; margin-right: 13px; }
.hist { flex: none; margin-right: 17px; }
.up { flex: none; margin-right: 9px; }
.address { width: 796px; height: 27px; border: 1px solid #8f8f8f; display: flex; align-items: center; padding: 0 6px 0 4px; margin-right: 10px; flex: none; }
.addr-fold { flex: none; }
.crumbs { flex: 1; display: flex; align-items: center; font-size: 14.500px; letter-spacing: -.2px; color: #222; gap: 11px; padding-left: 6px; white-space: nowrap; }
.sep { width: 0; height: 0; border-left: 5px solid #222; border-top: 4.500px solid transparent; border-bottom: 4.500px solid transparent; }
.addr-chev { margin-right: 13px; }
.search { width: 255px; height: 26px; border: 1px solid #8f8f8f; display: flex; align-items: center; justify-content: space-between; padding: 0 12px 0 10px; font-size: 14.500px; letter-spacing: -.15px; color: #6d6d6d; flex: none; }

.main { flex: 1; min-height: 0; background: #fff; display: flex; }
.tree { width: 393px; flex: none; padding: 9px 1px 0; font-size: 14.500px; letter-spacing: -.15px; color: #222; }
.t { height: 27px; display: flex; align-items: center; white-space: nowrap; }
.tico { flex: none; }
.t0 { padding-left: 23px; }
.t0 .tico { margin-right: 5px; }
.t1 { padding-left: 33px; }
.t1 .tico { margin-right: 5px; }
.gap { margin-top: 27px; }
.t-sel { background: #f0f0f0; border: 1px solid #dadada; padding-left: 32px; margin: 0 1px 0 0; }
.vscroll { width: 21px; flex: none; height: 552px; border: 1px solid #c8c8c8; border-top: 1px solid #dcdcdc; display: flex; flex-direction: column; }
.sb-btn { height: 20px; display: flex; align-items: center; justify-content: center; flex: none; background: #fff; }
.sb-thumb { height: 484px; background: #cdcdcd; border-top: 1px solid #b5b5b5; border-bottom: 1px solid #b5b5b5; display: flex; flex-direction: column; align-items: center; justify-content: center; gap: 2px; flex: none; }
.sb-thumb i { width: 9px; height: 1.500px; background: #6a6a6a; }
.sb-track { flex: 1; border-bottom: 1px solid #c8c8c8; }

.files { flex: 1; position: relative; margin-left: 4px; font-size: 14.500px; }
.fhead { height: 31px; width: 740px; display: flex; align-items: center; border-top: 1px solid #e5e5e5; border-bottom: 1px solid #dcdcdc; color: #55606a; }
.fhead span { height: 100%; display: flex; align-items: center; border-right: 1px solid #e5e5e5; position: relative; }
.c-name { width: 339px; padding-left: 21px; flex: none; }
.c-date { width: 150px; padding-left: 8px; flex: none; }
.c-type { width: 150px; padding-left: 8px; flex: none; }
.c-size { width: 101px; padding-left: 8px; flex: none; }
.sort { position: absolute; left: 171px; top: 1px; }
.frows { padding-top: 10px; width: 740px; }
.frow { height: 27px; display: flex; align-items: center; color: #6d6d6d; letter-spacing: -.2px; white-space: nowrap; }
.frow .c-name { color: #222; padding-left: 23px; display: flex; align-items: center; gap: 5px; }
.frow .c-size { text-align: right; padding-right: 10px; }
.redbox { position: absolute; left: 14px; top: 259px; width: 234px; height: 60px; border: 5px solid #ed1c24; }
.callout-arrow { position: absolute; left: 255px; top: 277px; }
.callout { position: absolute; left: 314px; top: 280px; font-family: Lato, sans-serif; font-weight: 900; font-size: 31.100px; line-height: 41px; color: #000; white-space: nowrap; }

.status { height: 29px; flex: none; background: #fff; display: flex; align-items: center; padding: 0 0 2px 17px; font-size: 14.500px; color: #444; }
.st-sep { width: 1px; height: 20px; background: #eee; margin-left: 12px; }
.views { margin-left: auto; display: flex; align-items: center; gap: 5px; padding-right: 13px; margin-top: 2px; }
.view-on { width: 28px; height: 28px; background: #cfe8f9; border: 1px solid #5d9bc4; display: flex; align-items: center; justify-content: center; }

/* taskbar */
.taskbar { position: absolute; left: 0; right: 0; bottom: 0; height: 47px; background: #63c6e8; border-top: 1px solid #56a8c6; display: flex; align-items: center; }
.tb-start { margin-left: 12px; margin-right: 30px; flex: none; }
.tb-srv { margin-right: 37px; flex: none; }
.tb-ps { margin-right: 19px; flex: none; }
.tb-btn { width: 71px; height: 46px; margin-right: 3px; border-right: 1px solid #3f8fae; border-left: 1px solid #3f8fae; display: flex; align-items: center; justify-content: center; flex: none; }
.tb-active { background: #9fd9f1; }
.tray { margin-left: auto; display: flex; align-items: center; gap: 10px; margin-right: 11px; }
.tray-arrow { margin-right: 6px; }
.clock { width: 90px; text-align: center; font-size: 14.500px; line-height: 21px; padding-top: 2px; color: #111; margin-right: 14px; }
```
